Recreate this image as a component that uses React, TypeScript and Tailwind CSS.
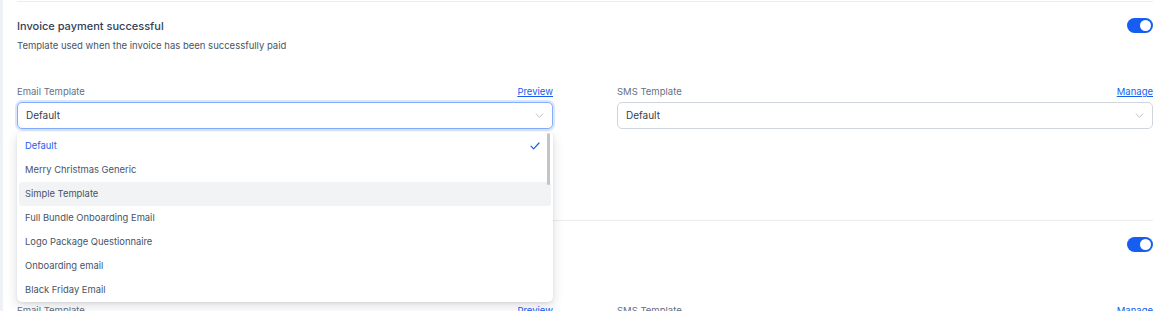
import * as React from 'react'

const TEMPLATES = [
  'Default',
  'Merry Christmas Generic',
  'Simple Template',
  'Full Bundle Onboarding Email',
  'Logo Package Questionnaire',
  'Onboarding email',
  'Black Friday Email',
]

const Toggle: React.FC = () => (
  <div className="flex h-[15px] w-[26px] shrink-0 items-center justify-end rounded-full bg-[#155eef] pr-[2px]">
    <div className="h-[11px] w-[11px] rounded-full bg-white" />
  </div>
)

const Chevron: React.FC = () => (
  <svg width="9" height="5" viewBox="0 0 9 5" fill="none" className="shrink-0">
    <path d="M1 0.8L4.5 4.2L8 0.8" stroke="#b4bcc8" strokeWidth="0.9" strokeLinecap="round" strokeLinejoin="round" />
  </svg>
)

const Check: React.FC = () => (
  <svg width="10" height="8" viewBox="0 0 10 8" fill="none">
    <path d="M1 4.2L3.6 6.8L9 1" stroke="#155eef" strokeWidth="1.2" strokeLinecap="round" strokeLinejoin="round" />
  </svg>
)

const Field: React.FC<{
  label: string
  link: string
  focused?: boolean
  children?: React.ReactNode
}> = ({ label, link, focused, children }) => (
  <div className="relative flex flex-col">
    <div className="flex h-[14px] items-center justify-between">
      <span className="text-[9.5px] text-[#667085]">{label}</span>
      <a className="text-[9.5px] text-[#155eef] underline">{link}</a>
    </div>
    <div
      className={
        focused
          ? 'mt-[3px] flex h-[27px] items-center justify-between rounded-[5px] border border-[#84adff] bg-white pl-[8px] pr-[8px] shadow-[0_0_0_2px_#dbe6fe]'
          : 'mt-[3px] flex h-[27px] items-center justify-between rounded-[5px] border border-[#d0d5dd] bg-white pl-[8px] pr-[8px]'
      }
    >
      <span className="text-[10px] text-[#344054]">Default</span>
      <Chevron />
    </div>
    {children}
  </div>
)

const Dropdown: React.FC = () => (
  <div className="absolute left-0 right-0 top-[47px] z-10 rounded-[5px] bg-white pt-[2px] shadow-[0_4px_12px_rgba(16,24,40,0.14),0_1px_3px_rgba(16,24,40,0.08)]">
    {TEMPLATES.map((name, i) => (
      <div
        key={name}
        className={
          i === 2
            ? 'mx-[2px] flex h-[24px] items-center justify-between rounded-[3px] bg-[#f2f3f5] pl-[6px] pr-[6px]'
            : 'mx-[2px] flex h-[24px] items-center justify-between pl-[6px] pr-[6px]'
        }
      >
        <span className={i === 0 ? 'text-[9.4px] text-[#155eef]' : 'text-[9.4px] text-[#475467]'}>
          {name}
        </span>
        {i === 0 && (
          <span className="mr-[5px]">
            <Check />
          </span>
        )}
      </div>
    ))}
    <div className="absolute right-[3px] top-[1px] h-[52px] w-[3px] rounded-full bg-[#c4c4c4]" />
  </div>
)

const Section: React.FC<{ open?: boolean }> = ({ open }) => (
  <section className="border-t border-[#eaecf0] pt-[16px] pb-[91px]">
    <div className="flex items-start justify-between">
      <div className="flex flex-col">
        <h3 className="text-[11px] font-medium leading-[16px] text-[#344054]">
          Invoice payment successful
        </h3>
        <p className="mt-[5px] text-[9.5px] leading-[14px] text-[#475467]">
          Template used when the invoice has been successfully paid
        </p>
      </div>
      <Toggle />
    </div>
    <div className="mt-[32px] grid grid-cols-2 gap-[64px]">
      <Field label="Email Template" link="Preview" focused={open}>
        {open && <Dropdown />}
      </Field>
      <Field label="SMS Template" link="Manage" />
    </div>
  </section>
)

export default function App() {
  return (
    <div
      className="h-[311px] w-full overflow-hidden border-l-[3px] border-[#eef2f7] bg-white pl-[14px] pr-[12px] pt-[1px]"
      style={{ fontFamily: 'Inter, "Noto Sans", sans-serif' }}
    >
      <Section open />
      <Section />
    </div>
  )
}
